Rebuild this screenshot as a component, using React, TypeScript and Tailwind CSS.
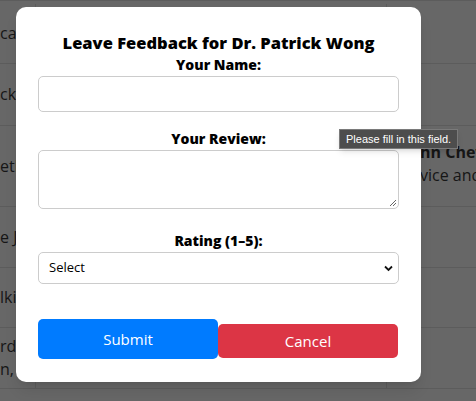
import React from 'react'

const font = { fontFamily: "'Open Sans', 'Noto Sans', sans-serif" }

const rows: { h: string; left: string[]; right?: { title: string; sub: string } }[] = [
  { h: 'h-[60px]', left: ['ca'] },
  { h: 'h-[62px]', left: ['ck'] },
  { h: 'h-[81px]', left: ['eth'], right: { title: 'hn Chew', sub: 'vice and' } },
  { h: 'h-[61px]', left: ['e J'] },
  { h: 'h-[60px]', left: ['lki'] },
  { h: 'h-[61px]', left: ['rd', 'n,'] },
]

function Backdrop() {
  return (
    <div className="w-full h-full bg-[#676767] pt-[3px] border-t border-[#5c5c5c]">
      {rows.map((r, i) => (
        <div key={i} className={`flex ${r.h} border-b border-[#5c5c5c]`}>
          <div className="w-[36px] border-r border-[#5c5c5c] overflow-hidden flex flex-col justify-center text-[16px] leading-[23px] text-[#161616] whitespace-nowrap">
            {r.left.map((t, j) => <span key={j}>{t}</span>)}
          </div>
          <div className="w-[351px] border-r border-[#5c5c5c]" />
          <div className="flex-1 overflow-hidden flex flex-col justify-center whitespace-nowrap text-[#161616]">
            {r.right && (
              <div className="pl-[33px] pb-[4px]">
                <p className="text-[16px] font-bold leading-[23px]">{r.right.title}</p>
                <p className="text-[16px] leading-[23px]">{r.right.sub}</p>
              </div>
            )}
          </div>
        </div>
      ))}
    </div>
  )
}

export default function App() {
  return (
    <div className="relative w-[476px] h-[401px] overflow-hidden" style={font}>
      <Backdrop />

      {/* Modal */}
      <div className="absolute left-[16px] top-[7px] w-[405px] h-[375px] bg-white rounded-[10px] px-[22px] pt-[24px] shadow-lg">
        <h3 className="text-center text-[16.5px] font-extrabold leading-[24px] text-black">Leave Feedback for Dr. Patrick Wong</h3>
        <label className="block text-center text-[14px] font-extrabold leading-[20px] text-black">Your Name:</label>
        <input className="block w-full h-[36px] mt-[1px] border border-[#cccccc] rounded-[5px] px-2 text-sm outline-none" />

        <label className="block text-center text-[14px] font-extrabold leading-[20px] text-black mt-[17px]">Your Review:</label>
        <div className="relative mt-[1px]">
          <textarea className="block w-full h-[59px] border border-[#cccccc] rounded-[5px] px-2 text-sm outline-none resize-none" />
          <svg className="absolute right-[2px] bottom-[2px]" width="8" height="8" viewBox="0 0 8 8">
            <path d="M7 1 L1 7 M7 4 L4 7" stroke="#666" strokeWidth="1" />
          </svg>
        </div>

        <label className="block text-center text-[14px] font-extrabold leading-[20px] text-black mt-[22px]">Rating (1–5):</label>
        <div className="relative mt-[1px]">
          <select className="block w-full h-[32px] appearance-none border border-[#cccccc] rounded-[5px] pl-[10px] text-[13px] text-black bg-white outline-none">
            <option>Select</option>
          </select>
          <svg className="absolute right-[6px] top-[13px]" width="9" height="7" viewBox="0 0 9 7">
            <path d="M1 1.5 L4.5 5 L8 1.5" stroke="#111" strokeWidth="1.8" fill="none" />
          </svg>
        </div>

        <div className="flex items-start mt-[35px]">
          <button className="w-[180px] h-[40px] bg-[#007bff] text-white text-[15px] rounded-[5px]">Submit</button>
          <button className="w-[180px] h-[34px] mt-[5px] bg-[#dc3545] text-white text-[15px] rounded-[5px]">Cancel</button>
        </div>
      </div>

      {/* Validation tooltip */}
      <div className="absolute left-[339px] top-[129px] h-[20px] px-[6px] flex items-center bg-[#4d4d4d] border border-[#7a7a7a] text-white text-[11px] shadow-md" style={{ fontFamily: "'Liberation Sans', Arial, sans-serif" }}>
        Please fill in this field.
      </div>
    </div>
  )
}
